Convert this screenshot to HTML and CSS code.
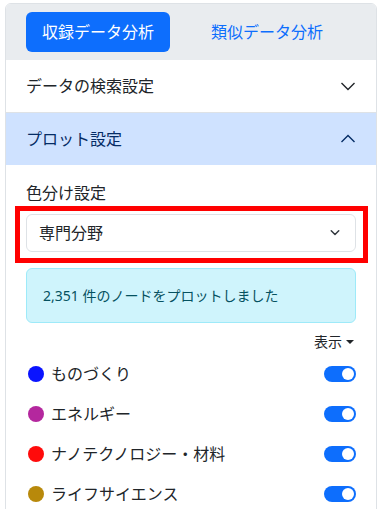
FILE: index.html
```html
<!DOCTYPE html>
<html lang="ja">
<head>
<meta charset="utf-8">
<link rel="stylesheet" href="styles.css">
</head>
<body>
<div class="panel">
  <div class="tabs">
    <button class="tab active">収録データ分析</button>
    <button class="tab">類似データ分析</button>
  </div>
  <div class="acc-header">
    <span>データの検索設定</span>
    <svg class="chev" viewBox="0 0 16 16" width="16" height="16"><path d="M1.5 5l6.5 6.5L14.5 5" fill="none" stroke="#212529" stroke-width="1.4"/></svg>
  </div>
  <div class="acc-header open">
    <span>プロット設定</span>
    <svg class="chev" viewBox="0 0 16 16" width="16" height="16"><path d="M1.5 11l6.5-6.5L14.5 11" fill="none" stroke="#052c65" stroke-width="1.4"/></svg>
  </div>
  <div class="acc-body">
    <div class="label">色分け設定</div>
    <div class="select-wrap">
      <div class="select">
        <span>専門分野</span>
        <svg viewBox="0 0 16 16" width="16" height="12"><path d="M3 5l5 5 5-5" fill="none" stroke="#343a40" stroke-width="2" stroke-linecap="round" stroke-linejoin="round"/></svg>
      </div>
      <div class="highlight"></div>
    </div>
    <div class="alert">2,351 件のノードをプロットしました</div>
    <div class="show-row"><span class="show">表示<span class="caret"></span></span></div>
    <ul class="legend">
      <li><span class="dot" style="background:#0a14ff"></span><span class="name">ものづくり</span><span class="switch"></span></li>
      <li><span class="dot" style="background:#b4279e"></span><span class="name">エネルギー</span><span class="switch"></span></li>
      <li><span class="dot" style="background:#ff0b0b"></span><span class="name">ナノテクノロジー・材料</span><span class="switch"></span></li>
      <li><span class="dot" style="background:#b8890b"></span><span class="name">ライフサイエンス</span><span class="switch"></span></li>
    </ul>
  </div>
</div>
</body>
</html>
```

FILE: styles.css
```css
* { box-sizing: border-box; }
html, body { margin: 0; padding: 0; background: #fff; }
body {
  font-family: "Noto Sans", "Noto Sans CJK JP", sans-serif;
  color: #212529;
  font-size: 16px;
  line-height: 24px;
  overflow: hidden;
}
.panel {
  margin: 3px 0 0 5px;
  width: 372px;
  height: 520px;
  border: 1px solid #dee2e6;
  border-top-left-radius: 6px;
  border-top-right-radius: 6px;
  overflow: hidden;
}
.tabs {
  background: #e9ecef;
  padding: 8px 20px;
  display: flex;
  align-items: center;
  height: 56px;
}
.tab {
  font: inherit;
  border: 0;
  background: transparent;
  color: #0d6efd;
  padding: 8px 16px;
  line-height: 24px;
  border-radius: 6px;
}
.tab.active {
  background: #0d6efd;
  color: #fff;
}
.tab + .tab { margin-left: 25px; }
.acc-header {
  display: flex;
  align-items: center;
  justify-content: space-between;
  height: 53px;
  padding: 0 20px;
  border-bottom: 1px solid #dee2e6;
  background: #fff;
}
.acc-header.open {
  background: #cfe2ff;
  color: #052c65;
  height: 52px;
  border-bottom: 0;
}
.acc-body { padding: 16px 20px; }
.label { margin-bottom: 9px; }
.select-wrap { position: relative; }
.select {
  height: 38px;
  border: 1px solid #dee2e6;
  border-radius: 6px;
  padding: 0 12px;
  display: flex;
  align-items: center;
  justify-content: space-between;
}
.highlight {
  position: absolute;
  top: -8px;
  left: -11px;
  right: -12px;
  bottom: -11px;
  border: 5px solid #ff0000;
  pointer-events: none;
}
.alert {
  margin-top: 16px;
  height: 55px;
  background: #cff4fc;
  border: 1px solid #9eeaf9;
  border-radius: 6px;
  color: #055160;
  font-size: 14px;
  line-height: 21px;
  padding: 16px;
}
.show-row {
  margin-top: 8px;
  display: flex;
  justify-content: flex-end;
  font-size: 14px;
  line-height: 21px;
  padding-right: 2px;
}
.caret {
  display: inline-block;
  margin-left: 4px;
  vertical-align: 3px;
  border-top: 4.5px solid #212529;
  border-left: 4px solid transparent;
  border-right: 4px solid transparent;
}
.legend { list-style: none; margin: 2px 0 0; padding: 0; }
.legend li {
  display: flex;
  align-items: center;
  height: 40px;
}
.dot {
  width: 16px;
  height: 16px;
  border-radius: 50%;
  margin-left: 2px;
  margin-right: 7px;
  flex: none;
}
.name { flex: 1; }
.switch {
  position: relative;
  width: 32px;
  height: 16px;
  border-radius: 8px;
  background: #0d6efd;
  flex: none;
}
.switch::after {
  content: "";
  position: absolute;
  right: 2px;
  top: 2px;
  width: 12px;
  height: 12px;
  border-radius: 50%;
  background: #fff;
}
```
